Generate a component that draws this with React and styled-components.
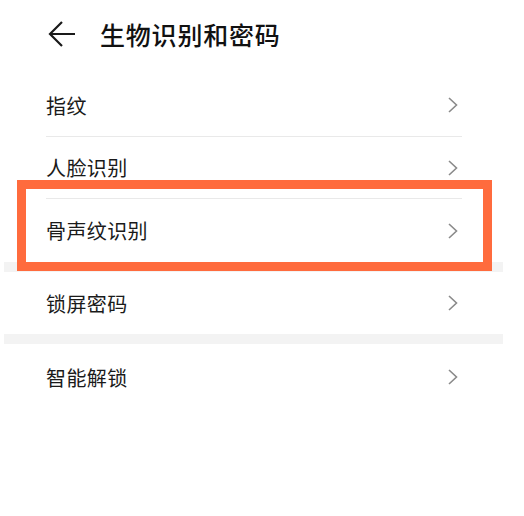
import React from 'react';
import styled, { createGlobalStyle } from 'styled-components';

const GlobalStyle = createGlobalStyle`
  html, body {
    margin: 0;
    padding: 0;
    background: #ffffff;
  }
  body {
    font-family: "Noto Sans CJK SC", "Noto Sans", sans-serif;
    color: #1a1a1a;
  }
`;

const Screen = styled.div`
  position: relative;
  width: 499px;
  margin-left: 4px;
  background: #ffffff;
`;

const Header = styled.div`
  display: flex;
  align-items: center;
  height: 74px;
  padding: 0 0 6px 43px;
  box-sizing: border-box;
  gap: 24px;
`;

const BackButton = styled.button`
  border: none;
  background: none;
  padding: 0;
  display: flex;
  align-items: center;
  cursor: pointer;
`;

const Title = styled.h1`
  margin: 0;
  font-size: 25px;
  font-weight: 500;
  color: #111111;
  letter-spacing: 0.8px;
`;

const Group = styled.div`
  display: flex;
  flex-direction: column;
`;

const Row = styled.div`
  display: flex;
  align-items: center;
  justify-content: space-between;
  height: ${(p) => p.$height || 62}px;
  margin: 0 41px 0 42px;
  box-sizing: border-box;
  border-bottom: ${(p) => (p.$divider ? '1px solid #e9e9e9' : 'none')};
`;

const Label = styled.span`
  font-size: 20px;
  color: #1a1a1a;
  letter-spacing: 0.4px;
`;

const Band = styled.div`
  height: 10px;
  background: #f3f3f3;
`;

const Highlight = styled.div`
  position: absolute;
  left: 13px;
  top: 180px;
  width: 475px;
  height: 91px;
  box-sizing: border-box;
  border: 9px solid #ff6b3d;
  pointer-events: none;
`;

const Chevron = () => (
  <svg width="12" height="18" viewBox="0 0 12 18" style={{ marginRight: 3 }}>
    <path d="M2 2 L9.5 9 L2 16" fill="none" stroke="#8a8a8a" strokeWidth="1.6" />
  </svg>
);

const BackArrow = () => (
  <svg width="29" height="28" viewBox="0 0 29 28">
    <path d="M28 14 H3 M15 2 L3 14 L15 26" fill="none" stroke="#1a1a1a" strokeWidth="2.2" />
  </svg>
);

const Item = ({ label, divider, height }) => (
  <Row $divider={divider} $height={height}>
    <Label>{label}</Label>
    <Chevron />
  </Row>
);

export default function App() {
  return (
    <>
      <GlobalStyle />
      <Screen>
        <Header>
          <BackButton aria-label="back">
            <BackArrow />
          </BackButton>
          <Title>生物识别和密码</Title>
        </Header>
        <Group>
          <Item label="指纹" divider height={63} />
          <Item label="人脸识别" divider />
          <Item label="骨声纹识别" height={63} />
        </Group>
        <Band />
        <Group>
          <Item label="锁屏密码" />
        </Group>
        <Band />
        <Group>
          <Item label="智能解锁" height={66} />
        </Group>
        <Highlight />
      </Screen>
    </>
  );
}
